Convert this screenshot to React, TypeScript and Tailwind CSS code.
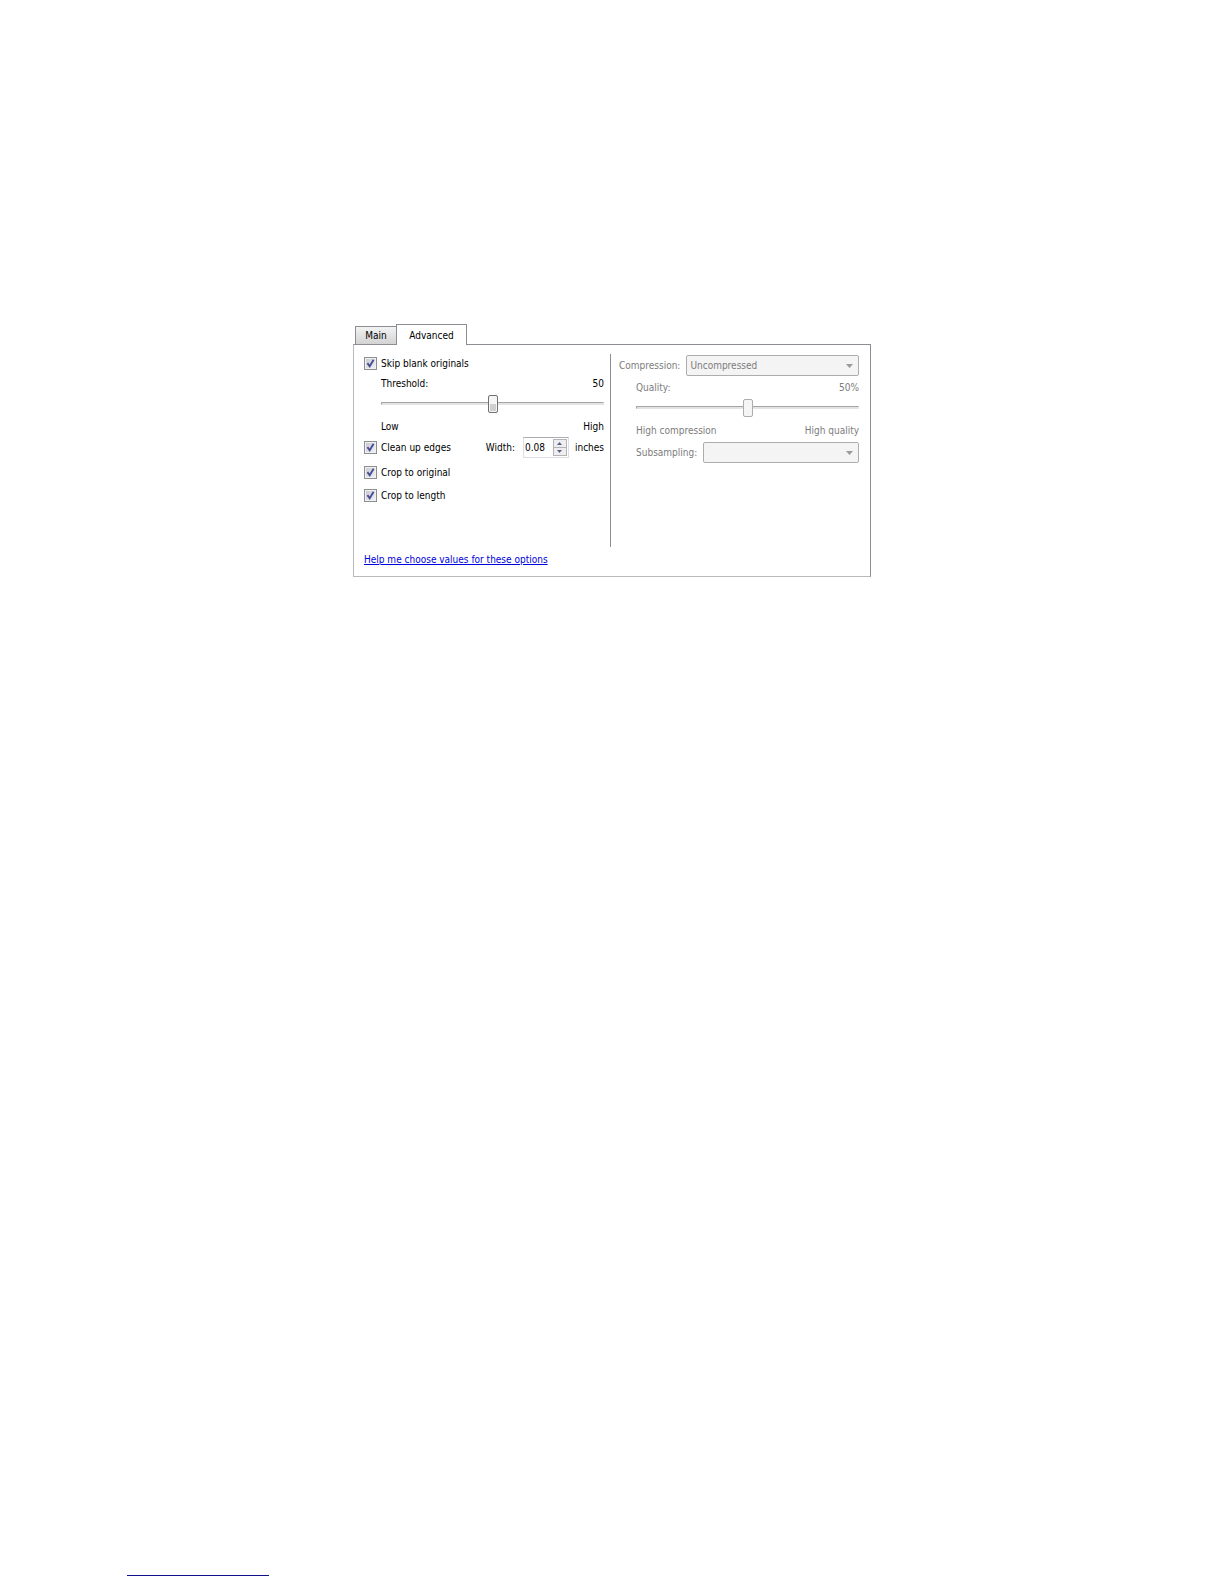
import { useState } from "react";
import type { ReactNode } from "react";

type CheckProps = {
  label: string;
};

const CheckOption = ({ label }: CheckProps) => {
  const [checked, setChecked] = useState(true);

  return (
    <label className="flex items-center gap-1">
      <span className="relative block size-[13px]">
        <input
          type="checkbox"
          checked={checked}
          onChange={() => setChecked(!checked)}
          className="block size-[13px] appearance-none border border-[#8e8f8f] bg-linear-to-br from-[#c4c8d2] to-[#f4f4f6] shadow-[inset_0_0_0_1px_#f0f0f0]"
        />
        {checked && (
          <svg
            viewBox="0 0 13 13"
            className="pointer-events-none absolute inset-0 size-[13px]"
            fill="none"
            stroke="#4b4f92"
            strokeWidth="1.9"
          >
            <path d="M3.4 6.2 L5.7 9.2 L9.6 2.8" />
          </svg>
        )}
      </span>
      {label}
    </label>
  );
};

type SliderProps = {
  label: string;
  value: number;
  onChange?: (value: number) => void;
  disabled?: boolean;
};

const Slider = ({ label, value, onChange, disabled }: SliderProps) => (
  <input
    type="range"
    aria-label={label}
    min={0}
    max={100}
    value={value}
    disabled={disabled}
    onChange={(e) => onChange?.(Number(e.target.value))}
    className="block h-[18px] w-full appearance-none bg-transparent [&::-webkit-slider-runnable-track]:h-[3px] [&::-webkit-slider-runnable-track]:border [&::-webkit-slider-runnable-track]:border-[#e3e3e3] [&::-webkit-slider-runnable-track]:border-t-[#a5a5a5] [&::-webkit-slider-runnable-track]:border-l-[#a5a5a5] [&::-webkit-slider-runnable-track]:bg-[#e3e3e3] [&::-webkit-slider-thumb]:-mt-2 [&::-webkit-slider-thumb]:h-[18px] [&::-webkit-slider-thumb]:w-[10px] [&::-webkit-slider-thumb]:appearance-none [&::-webkit-slider-thumb]:rounded-[2px] [&::-webkit-slider-thumb]:border [&::-webkit-slider-thumb]:border-[#707070] [&::-webkit-slider-thumb]:bg-linear-to-b [&::-webkit-slider-thumb]:from-[#f5f5f5] [&::-webkit-slider-thumb]:from-50% [&::-webkit-slider-thumb]:to-[#cfcfcf] [&::-webkit-slider-thumb]:to-50% [&::-webkit-slider-thumb]:shadow-[inset_0_0_0_1px_#f5f5f5] disabled:[&::-webkit-slider-thumb]:border-[#adadad] disabled:[&::-webkit-slider-thumb]:to-[#f5f5f5]"
  />
);

type ComboProps = {
  id: string;
  children: ReactNode;
};

const Combo = ({ id, children }: ComboProps) => (
  <div className="relative flex-1">
    <select
      id={id}
      disabled
      className="block h-[21px] w-full appearance-none rounded-[2px] border border-[#adadad] bg-[#f4f4f4] pl-[3px] opacity-100"
    >
      {children}
    </select>
    <svg
      viewBox="0 0 7 4"
      className="pointer-events-none absolute top-[9px] right-[6px] h-1 w-[7px] fill-[#9a9a9a]"
    >
      <path d="M0 0h7L3.5 4z" />
    </svg>
  </div>
);

export default function App() {
  const [threshold, setThreshold] = useState(50);
  const [width, setWidth] = useState("0.08");

  const step = (delta: number) => {
    setWidth(Math.max(0, Number(width) + delta).toFixed(2));
  };

  return (
    <div className="flex min-h-screen flex-col bg-white pt-[324px] font-['DejaVu_Sans_Condensed',sans-serif] text-[10px] leading-[17px] text-black">
      <main className="mx-auto w-full max-w-[518px]">
        <div role="tablist" className="flex items-end pl-[2px]">
          <button
            role="tab"
            aria-selected="false"
            className="h-[18px] w-[41px] border border-r-0 border-b-0 border-[#8c8e94] bg-linear-to-b from-[#f3f3f3] to-[#d3d3d3]"
          >
            Main
          </button>
          <button
            role="tab"
            aria-selected="true"
            className="relative -mb-px h-[21px] w-[71px] border border-b-0 border-[#8c8e94] bg-white"
          >
            Advanced
          </button>
        </div>

        <div
          role="tabpanel"
          className="border border-[#8c8e94] border-b-[#b8b9bc] border-l-[#b8b9bc] pt-[9px] pb-[5px]"
        >
          <div className="grid grid-cols-[257fr_259fr]">
            <div className="h-[193px] border-r border-[#8c8e94] pr-[6px] pl-[10px]">
              <div className="flex h-[18px] items-center">
                <CheckOption label="Skip blank originals" />
              </div>
              <div className="pl-[17px]">
                <div className="flex h-[22px] items-center justify-between">
                  <span>Threshold:</span>
                  <span>{threshold}</span>
                </div>
                <Slider label="Threshold" value={threshold} onChange={setThreshold} />
                <div className="mt-1 flex h-5 items-center justify-between">
                  <span>Low</span>
                  <span>High</span>
                </div>
              </div>
              <div className="flex h-[22px] items-center justify-between">
                <CheckOption label="Clean up edges" />
                <div className="flex items-center">
                  <label htmlFor="edge-width">Width:</label>
                  <div className="mr-[6px] ml-2 flex h-[21px] w-[46px] border border-[#dcdfe6] border-t-[#abadb3] p-px">
                    <input
                      id="edge-width"
                      type="text"
                      value={width}
                      onChange={(e) => setWidth(e.target.value)}
                      className="w-[28px] min-w-0 flex-1 outline-none"
                    />
                    <div className="flex w-[14px] flex-col">
                      <button
                        aria-label="Increase"
                        onClick={() => step(0.01)}
                        className="grid flex-1 place-items-center border border-[#b4b4b8] bg-[#eeeef0]"
                      >
                        <svg viewBox="0 0 5 3" className="h-[3px] w-[5px] fill-[#5c6080]">
                          <path d="M0 3h5L2.5 0z" />
                        </svg>
                      </button>
                      <button
                        aria-label="Decrease"
                        onClick={() => step(-0.01)}
                        className="grid flex-1 place-items-center border border-t-0 border-[#b4b4b8] bg-[#eeeef0]"
                      >
                        <svg viewBox="0 0 5 3" className="h-[3px] w-[5px] fill-[#5c6080]">
                          <path d="M0 0h5L2.5 3z" />
                        </svg>
                      </button>
                    </div>
                  </div>
                  <span>inches</span>
                </div>
              </div>
              <div className="mt-[3px] flex h-[23px] items-center">
                <CheckOption label="Crop to original" />
              </div>
              <div className="flex h-[23px] items-center">
                <CheckOption label="Crop to length" />
              </div>
            </div>

            <div className="pr-[11px] pl-2 text-[#7c7c7c]">
              <div className="flex h-[22px] items-center gap-[6px]">
                <label htmlFor="compression">Compression:</label>
                <Combo id="compression">
                  <option>Uncompressed</option>
                </Combo>
              </div>
              <div className="pl-[17px]">
                <div className="flex h-[22px] items-center justify-between">
                  <span>Quality:</span>
                  <span>50%</span>
                </div>
                <Slider label="Quality" value={50} disabled />
                <div className="mt-1 flex h-5 items-center justify-between">
                  <span>High compression</span>
                  <span>High quality</span>
                </div>
                <div className="mt-px flex h-[22px] items-center gap-[6px]">
                  <label htmlFor="subsampling">Subsampling:</label>
                  <Combo id="subsampling">
                    <option></option>
                  </Combo>
                </div>
              </div>
            </div>
          </div>

          <div className="flex h-6 items-center pl-[10px]">
            <a href="#" className="text-[#0000dd] underline">
              Help me choose values for these options
            </a>
          </div>
        </div>
      </main>

      <footer className="mt-auto pb-2 pl-[127px]">
        <div className="w-[142px] border-b border-[#10108c]" />
      </footer>
    </div>
  );
}
